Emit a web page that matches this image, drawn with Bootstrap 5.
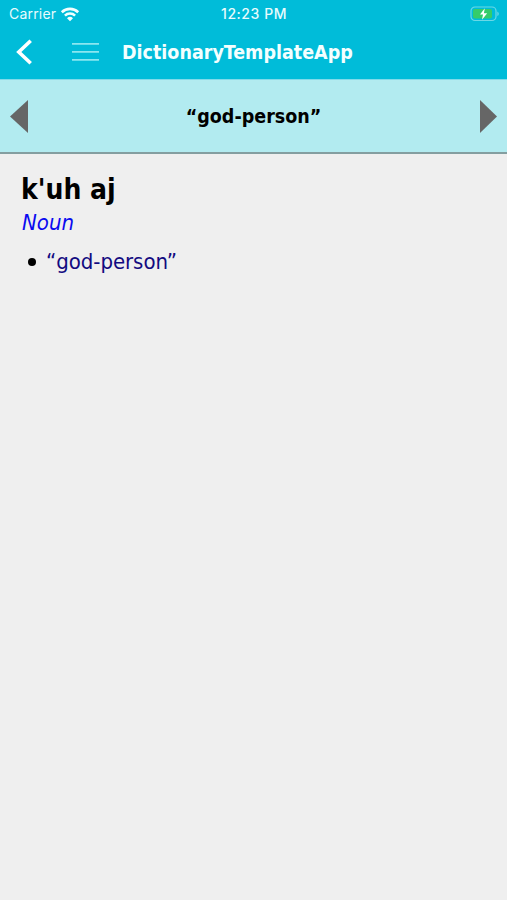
<!DOCTYPE html>
<html lang="en">
<head>
<meta charset="utf-8">
<meta name="viewport" content="width=device-width, initial-scale=1">
<title>DictionaryTemplateApp</title>
<link href="https://cdn.jsdelivr.net/npm/bootstrap@5.3.0/dist/css/bootstrap.min.css" rel="stylesheet">
<style>
body { background: #efefef; color: #000; font-family: "DejaVu Sans Condensed", "DejaVu Sans", sans-serif; font-stretch: condensed; }
.app-top { background: #00bcd9; height: 79px; color: #e8fbfd; }
.status-bar { height: 28px; padding: 0 8px 0 9px; font: 14px/28px Inter, sans-serif; }
.status-side { flex: 1 1 0; }
.clock { font-weight: 500; letter-spacing: .55px; }
.carrier { letter-spacing: .2px; }
.title-bar { height: 48px; padding-left: 16px; }
.menu-icon { margin-left: 39px; }
.app-title { font-size: 19.5px; line-height: 46px; margin-left: 23px; padding-top: 2px; color: #f4ffff; }
.entry-bar { background: #b2ebf0; height: 75px; padding: 0 10px; border-top: 1px solid #80dbea; border-bottom: 2px solid #849ea0; }
.entry-name { font-size: 19.5px; padding-top: 2px; }
.entry-body { padding: 19px 22px 19px 21px; }
.headword { font-size: 28px; line-height: 34px; }
.pos { font-size: 22px; line-height: 32px; padding-left: 1px; color: #0a0af0; }
.senses { font-size: 22px; line-height: 32px; margin-top: 7px; padding-left: 7px; list-style: none; }
.dot { width: 8px; height: 8px; border-radius: 50%; background: #000; margin-right: 10px; }
.gloss { color: #120a80; letter-spacing: -.05px; }
svg { display: block; flex: none; }
</style>
</head>
<body>
<header class="app-top">
  <div class="status-bar d-flex align-items-center">
    <div class="status-side d-flex align-items-center">
      <span class="carrier">Carrier</span>
      <svg class="ms-1" width="20" height="16" viewBox="0 0 20 16" fill="none" stroke="#f2ffff" stroke-width="2.6"><path d="M1.8 6.2a11.8 11.8 0 0 1 16.4 0M4.9 9.6a7.4 7.4 0 0 1 10.2 0"/><path d="M10 15.2l-3-3a4.3 4.3 0 0 1 6 0z" fill="#f2ffff" stroke="none"/></svg>
    </div>
    <span class="clock">12:23 PM</span>
    <div class="status-side d-flex justify-content-end">
      <svg width="29" height="16" viewBox="0 0 29 16"><rect x="1" y="1" width="25" height="13.5" rx="4" fill="none" stroke="#6bd8e7" stroke-width="1.2"/><rect x="3" y="3" width="19" height="9.5" rx="2" fill="#35cc6a"/><path d="M27.3 5.5v4.6q1.5-.7 1.5-2.3t-1.5-2.3z" fill="#6bd8e7"/><path d="M14.8 2.3l-4.8 6.2h3l-1 5.2 5.2-6.5h-3.3z" fill="#fff"/></svg>
    </div>
  </div>
  <nav class="title-bar d-flex align-items-center" aria-label="Main">
    <svg width="17" height="28" viewBox="0 0 17 28" fill="none" stroke="#fff" stroke-width="3.6"><path d="M14.7 2.7L2.8 14l11.9 11.3"/></svg>
    <svg class="menu-icon" width="27" height="20" viewBox="0 0 27 20" stroke="#8be6f0" stroke-width="1.7"><path d="M0 1.8h27M0 9.8h27M0 17.8h27"/></svg>
    <span class="app-title fw-bold">DictionaryTemplateApp</span>
  </nav>
</header>
<section class="entry-bar d-flex align-items-center justify-content-between">
  <svg width="18" height="33" viewBox="0 0 18 33"><path d="M18 0v33L0 16.5z" fill="#666"/></svg>
  <span class="entry-name fw-bold">“god-person”</span>
  <svg width="18" height="33" viewBox="0 0 18 33"><path d="M1 0v33l17-16.5z" fill="#666"/></svg>
</section>
<main class="entry-body">
  <h1 class="headword fw-bold mb-0">k'uh aj</h1>
  <div class="pos fst-italic">Noun</div>
  <ul class="senses mb-0"><li class="d-flex align-items-center"><span class="dot"></span><span class="gloss">“god-person”</span></li></ul>
</main>
<script src="https://cdn.jsdelivr.net/npm/bootstrap@5.3.0/dist/js/bootstrap.bundle.min.js"></script>
</body>
</html>
